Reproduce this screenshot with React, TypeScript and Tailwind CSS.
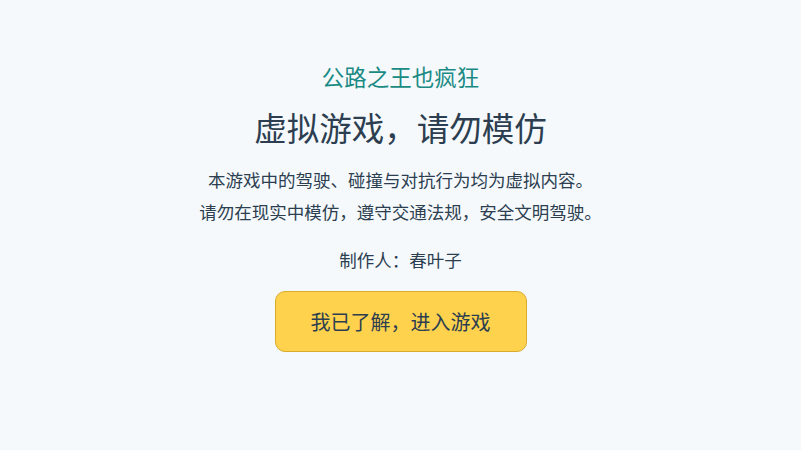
export default function App() {
  return (
    <div
      className="w-full h-[450px] bg-[#f5f9fc] flex flex-col items-center text-center"
      style={{ fontFamily: '"Noto Sans CJK SC", "Noto Sans", sans-serif' }}
    >
      <div className="mt-[61px] text-[22.5px] leading-[30px] text-[#1a8a84]">公路之王也疯狂</div>
      <h1 className="mt-[14px] text-[32.5px] leading-[44px] text-[#2c3e50]">虚拟游戏，请勿模仿</h1>
      <div className="mt-[15px] text-[17.5px] leading-[32px] text-[#2c3e50]">
        <p>本游戏中的驾驶、碰撞与对抗行为均为虚拟内容。</p>
        <p>请勿在现实中模仿，遵守交通法规，安全文明驾驶。</p>
      </div>
      <div className="mt-[19px] text-[17.5px] leading-[26px] text-[#2c3e50]">制作人：春叶子</div>
      <button className="mt-[18px] w-[252px] h-[61px] rounded-[10px] bg-[#ffd24d] border border-[#d9ac2e] text-[20px] text-[#2c3e50]">
        我已了解，进入游戏
      </button>
    </div>
  );
}
